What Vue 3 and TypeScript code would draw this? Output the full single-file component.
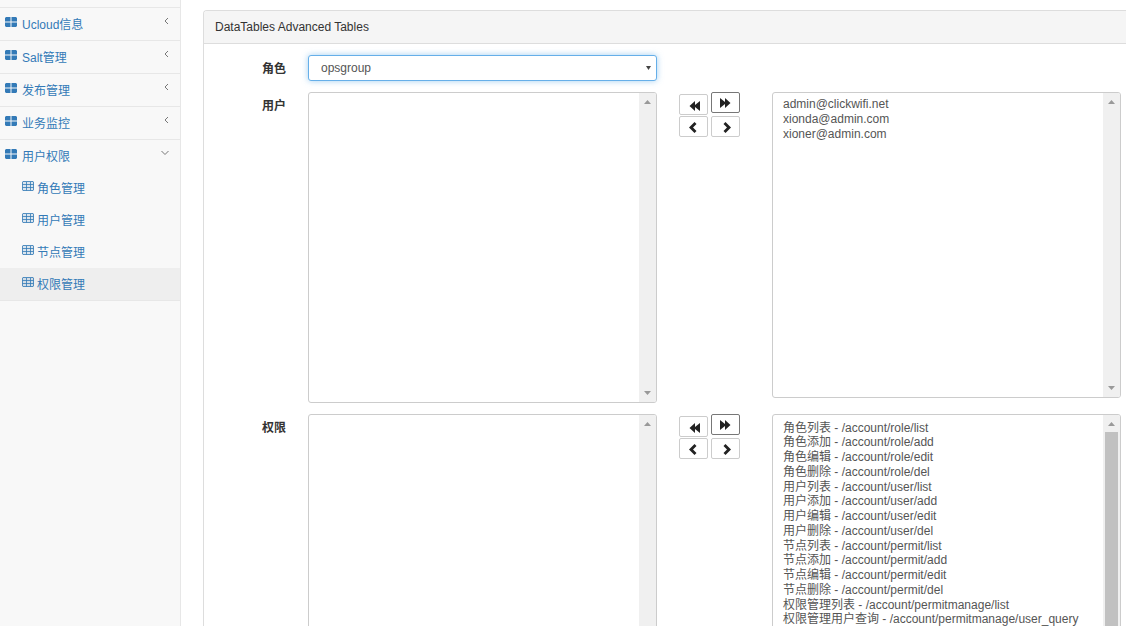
<script setup lang="ts">
import { ref } from 'vue'

interface MenuItem {
  label: string
  open?: boolean
  children?: string[]
}

interface TransferRow {
  id: string
  label: string
  options: string[]
  scrollable: boolean
}

const menu: MenuItem[] = [
  { label: 'Ucloud信息' },
  { label: 'Salt管理' },
  { label: '发布管理' },
  { label: '业务监控' },
  { label: '用户权限', open: true, children: ['角色管理', '用户管理', '节点管理', '权限管理'] },
]
const activeChild = '权限管理'

const role = ref('opsgroup')

const rows: TransferRow[] = [
  {
    id: 'users',
    label: '用户',
    options: ['admin@clickwifi.net', 'xionda@admin.com', 'xioner@admin.com'],
    scrollable: false,
  },
  {
    id: 'permissions',
    label: '权限',
    options: [
      '角色列表 - /account/role/list',
      '角色添加 - /account/role/add',
      '角色编辑 - /account/role/edit',
      '角色删除 - /account/role/del',
      '用户列表 - /account/user/list',
      '用户添加 - /account/user/add',
      '用户编辑 - /account/user/edit',
      '用户删除 - /account/user/del',
      '节点列表 - /account/permit/list',
      '节点添加 - /account/permit/add',
      '节点编辑 - /account/permit/edit',
      '节点删除 - /account/permit/del',
      '权限管理列表 - /account/permitmanage/list',
      '权限管理用户查询 - /account/permitmanage/user_query',
    ],
    scrollable: true,
  },
]

const moves = [
  { name: 'all-left', title: '全部左移', path: 'M7 2V6L12 2V12L7 8V12L1.500 7Z' },
  { name: 'all-right', title: '全部右移', path: 'M0 1L5 5V1L10.500 6L5 11V7L0 11Z' },
  { name: 'left', title: '左移', path: 'M6.500 1L8.500 3L5 6.500L8.500 10L6.500 12L1 6.500Z' },
  { name: 'right', title: '右移', path: 'M5.500 1L3.500 3L7 6.500L3.500 10L5.500 12L11 6.500Z' },
]
</script>

<template>
  <div class="page">
    <nav class="sidebar">
      <ul class="menu">
        <li v-for="item in menu" :key="item.label" class="menu-item">
          <a href="#" class="menu-link">
            <svg class="icon" viewBox="0 0 12 10" width="12" height="10">
              <path
                d="M1 0H5.500V4.500H0V1ZM6.500 0H11L12 1V4.500H6.500ZM0 5.500H5.500V10H1L0 9ZM6.500 5.500H12V9L11 10H6.500Z"
                fill="currentColor"
              />
            </svg>
            <span class="text">{{ item.label }}</span>
            <svg class="angle" viewBox="0 0 8 8" width="8" height="8">
              <path
                :d="item.open ? 'M0.500 2L4 5.500L7.500 2' : 'M7 1L4 4L7 7'"
                fill="none"
                stroke="#777"
              />
            </svg>
          </a>
          <ul v-if="item.children" class="submenu">
            <li v-for="child in item.children" :key="child">
              <a href="#" class="submenu-link" :class="{ active: child === activeChild }">
                <svg class="icon" viewBox="0 0 12 10" width="12" height="10">
                  <path
                    d="M1 0.500H11L11.500 1V9L11 9.500H1L0.500 9V1ZM0.500 3.500H11.500M0.500 6.500H11.500M4.500 1V9.500M8.500 1V9.500"
                    fill="none"
                    stroke="currentColor"
                    stroke-opacity="0.8"
                  />
                  <path d="M0 0H12V10H0Z" fill="currentColor" fill-opacity="0.15" />
                </svg>
                <span class="text">{{ child }}</span>
              </a>
            </li>
          </ul>
        </li>
      </ul>
    </nav>

    <main class="content">
      <section class="panel">
        <header class="panel-heading">DataTables Advanced Tables</header>
        <form class="panel-body" @submit.prevent>
          <div class="row">
            <label class="row-label" for="role">角色</label>
            <div class="role-box">
              <select id="role" v-model="role" class="role-select">
                <option>opsgroup</option>
              </select>
              <svg class="caret" viewBox="0 0 5 4" width="5" height="4">
                <path d="M0 0H5L2.500 4Z" fill="#444" />
              </svg>
            </div>
          </div>

          <div v-for="row in rows" :key="row.id" class="row">
            <label class="row-label" :for="row.id + '-chosen'">{{ row.label }}</label>
            <div class="list list-chosen">
              <select :id="row.id + '-chosen'" class="list-select" multiple></select>
              <div class="scrollbar" aria-hidden="true">
                <svg viewBox="0 0 7 4" width="7" height="4"><path d="M3.500 0L7 4H0Z" /></svg>
                <svg viewBox="0 0 7 4" width="7" height="4"><path d="M0 0H7L3.500 4Z" /></svg>
              </div>
            </div>
            <div class="moves">
              <button
                v-for="move in moves"
                :key="move.name"
                type="button"
                class="move"
                :class="move.name"
                :aria-label="move.title"
              >
                <svg viewBox="0 0 12 12" width="12" height="12"><path :d="move.path" fill="#222" /></svg>
              </button>
            </div>
            <div class="list">
              <select
                :id="row.id + '-available'"
                class="list-select"
                :class="{ dense: row.scrollable }"
                :aria-label="row.label"
                multiple
              >
                <option v-for="option in row.options" :key="option">{{ option }}</option>
              </select>
              <div class="scrollbar" aria-hidden="true">
                <svg viewBox="0 0 7 4" width="7" height="4"><path d="M3.500 0L7 4H0Z" /></svg>
                <div v-if="row.scrollable" class="thumb"></div>
                <svg viewBox="0 0 7 4" width="7" height="4"><path d="M0 0H7L3.500 4Z" /></svg>
              </div>
            </div>
          </div>
        </form>
      </section>
    </main>
  </div>
</template>

<style>
body {
  margin: 0;
  background: #fff;
}
</style>

<style scoped>
* {
  box-sizing: border-box;
}

.page {
  display: flex;
  height: 100vh;
  overflow: hidden;
  font-family: "Liberation Sans", "Noto Sans CJK SC", sans-serif;
  font-size: 12px;
  line-height: 16px;
  color: #333;
}

.sidebar {
  flex: 0 0 181px;
  padding-top: 7px;
  background: #f8f8f8;
  border-right: 1px solid #e7e7e7;
}

.menu,
.submenu {
  margin: 0;
  padding: 0;
  list-style: none;
}

.menu-item {
  border-top: 1px solid #e7e7e7;
}

.menu-item:last-child {
  border-bottom: 1px solid #e7e7e7;
}

.menu-link,
.submenu-link {
  display: flex;
  align-items: flex-start;
  height: 32px;
  padding: 9px 11px 0 5px;
  gap: 5px;
  color: #337ab7;
  text-decoration: none;
}

.submenu-link {
  padding-left: 22px;
  gap: 3px;
}

.submenu-link.active {
  background: #eee;
}

.icon {
  flex: none;
}

.angle {
  flex: none;
  margin-left: auto;
}

.content {
  flex: 1;
  min-width: 0;
  padding: 10px 0 0 22px;
}

.panel {
  border: 1px solid #ddd;
  border-right: 0;
  border-radius: 4px 0 0 4px;
}

.panel-heading {
  padding: 8px 11px;
  background: #f5f5f5;
  border-bottom: 1px solid #ddd;
  border-radius: 3px 0 0 0;
}

.panel-body {
  display: flex;
  flex-direction: column;
  gap: 11px;
  padding: 11px 5px 11px 0;
}

.row {
  display: grid;
  grid-template-columns: 82px 1fr 71px 1fr;
  align-items: start;
  column-gap: 22px;
}

.row-label {
  padding-top: 6px;
  text-align: right;
  font-weight: 700;
}

.role-box {
  position: relative;
}

.role-select {
  display: block;
  width: 100%;
  height: 26px;
  padding: 0 12px;
  appearance: none;
  background: #fff;
  border: 1px solid #66afe9;
  border-radius: 3px;
  outline: 0;
  box-shadow: 0 0 6px rgba(102, 175, 233, 0.6);
  font: inherit;
  color: #555;
}

.caret {
  position: absolute;
  top: 11px;
  right: 6px;
}

.list {
  display: flex;
  height: 306px;
  overflow: hidden;
  background: #fff;
  border: 1px solid #ccc;
  border-radius: 3px;
}

.list-chosen {
  height: 311px;
}

.list-select {
  flex: 1;
  min-width: 0;
  padding: 4px 8px;
  overflow: hidden;
  appearance: none;
  background: transparent;
  border: 0;
  outline: 0;
  font: inherit;
  color: #555;
}

.list-select option {
  height: 15px;
  min-height: 0;
  padding: 0 2px;
}

.list-select.dense {
  padding-top: 3px;
}

.list-select.dense option:nth-child(4n + 1) {
  height: 14px;
}

.scrollbar {
  display: flex;
  flex: 0 0 17px;
  flex-direction: column;
  align-items: center;
  justify-content: space-between;
  gap: 6px;
  padding: 7px 0;
  background: #f0f0f0;
  fill: #999;
}

.scrollbar svg {
  flex: none;
}

.thumb {
  flex: 1;
  width: 13px;
  background: #c1c1c1;
}

.moves {
  display: grid;
  grid-template-columns: 29px 29px;
  grid-template-rows: 23px 21px;
  gap: 1px 3px;
}

.move {
  display: flex;
  align-items: center;
  justify-content: center;
  height: 21px;
  padding: 0;
  background: #fff;
  border: 1px solid #ccc;
  border-radius: 2px;
}

.all-left {
  align-self: end;
}

.all-right {
  border-color: #777;
}
</style>
